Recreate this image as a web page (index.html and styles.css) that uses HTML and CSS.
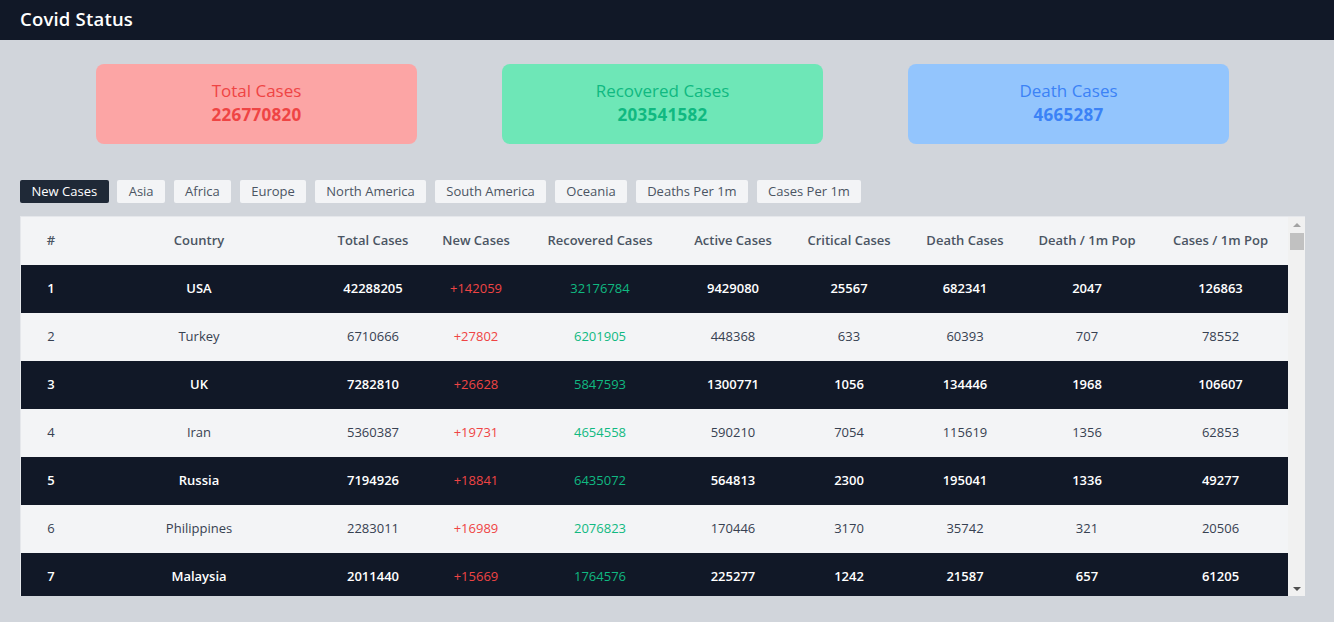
FILE: index.html
```html
<!DOCTYPE html>
<html>
<head>
<meta charset="utf-8">
<link rel="stylesheet" href="styles.css">
</head>
<body>
<header class="topbar"><h1 class="brand">Covid Status</h1></header>
<main class="content">
  <section class="cards">
    <div class="card card-red"><div class="card-title">Total Cases</div><div class="card-num">226770820</div></div>
    <div class="card card-green"><div class="card-title">Recovered Cases</div><div class="card-num">203541582</div></div>
    <div class="card card-blue"><div class="card-title">Death Cases</div><div class="card-num">4665287</div></div>
  </section>
  <nav class="tabs">
    <button class="tab active">New Cases</button>
    <button class="tab">Asia</button>
    <button class="tab">Africa</button>
    <button class="tab">Europe</button>
    <button class="tab">North America</button>
    <button class="tab">South America</button>
    <button class="tab">Oceania</button>
    <button class="tab">Deaths Per 1m</button>
    <button class="tab">Cases Per 1m</button>
  </nav>
  <div class="table-wrap">
    <div class="table-view">
      <table class="grid">
        <colgroup>
          <col class="c1"><col class="c2"><col class="c3"><col class="c4"><col class="c5"><col class="c6"><col class="c7"><col class="c8"><col class="c9"><col class="c10">
        </colgroup>
        <thead>
          <tr><th>#</th><th>Country</th><th>Total Cases</th><th>New Cases</th><th>Recovered Cases</th><th>Active Cases</th><th>Critical Cases</th><th>Death Cases</th><th>Death / 1m Pop</th><th>Cases / 1m Pop</th></tr>
        </thead>
        <tbody>
          <tr class="dark"><td>1</td><td>USA</td><td>42288205</td><td class="neg">+142059</td><td class="pos">32176784</td><td>9429080</td><td>25567</td><td>682341</td><td>2047</td><td>126863</td></tr>
          <tr class="light"><td>2</td><td>Turkey</td><td>6710666</td><td class="neg">+27802</td><td class="pos">6201905</td><td>448368</td><td>633</td><td>60393</td><td>707</td><td>78552</td></tr>
          <tr class="dark"><td>3</td><td>UK</td><td>7282810</td><td class="neg">+26628</td><td class="pos">5847593</td><td>1300771</td><td>1056</td><td>134446</td><td>1968</td><td>106607</td></tr>
          <tr class="light"><td>4</td><td>Iran</td><td>5360387</td><td class="neg">+19731</td><td class="pos">4654558</td><td>590210</td><td>7054</td><td>115619</td><td>1356</td><td>62853</td></tr>
          <tr class="dark"><td>5</td><td>Russia</td><td>7194926</td><td class="neg">+18841</td><td class="pos">6435072</td><td>564813</td><td>2300</td><td>195041</td><td>1336</td><td>49277</td></tr>
          <tr class="light"><td>6</td><td>Philippines</td><td>2283011</td><td class="neg">+16989</td><td class="pos">2076823</td><td>170446</td><td>3170</td><td>35742</td><td>321</td><td>20506</td></tr>
          <tr class="dark short"><td>7</td><td>Malaysia</td><td>2011440</td><td class="neg">+15669</td><td class="pos">1764576</td><td>225277</td><td>1242</td><td>21587</td><td>657</td><td>61205</td></tr>
        </tbody>
      </table>
    </div>
    <div class="scrollbar">
      <div class="sb-btn"><span class="arrow-up"></span></div>
      <div class="sb-thumb"></div>
      <div class="sb-track"></div>
      <div class="sb-btn"><span class="arrow-down"></span></div>
    </div>
  </div>
</main>
</body>
</html>
```
FILE: styles.css
```css
* { box-sizing: border-box; }
html, body { margin: 0; padding: 0; }
body {
  background: #d1d5db;
  font-family: "Open Sans", "DejaVu Sans", sans-serif;
  color: #374151;
  height: 622px;
  overflow: hidden;
}
.topbar {
  background: #111827;
  height: 40px;
  display: flex;
  align-items: center;
  padding: 0 20px 3px;
}
.brand {
  margin: 0;
  color: #fff;
  font-size: 18.5px;
  font-weight: 600;
  letter-spacing: 0.2px;
}
.content { padding: 24px 20px 0 20px; }
.cards {
  display: flex;
  gap: 85px;
  padding-left: 76px;
}
.card {
  width: 321px;
  height: 80px;
  border-radius: 8px;
  display: flex;
  flex-direction: column;
  align-items: center;
  justify-content: center;
  gap: 1px;
  font-size: 17px;
  padding-bottom: 4px;
}
.card-title { font-weight: 400; }
.card-num { font-weight: 700; letter-spacing: 0.3px; }
.card-red { background: #fca5a5; color: #ef4444; }
.card-green { background: #6ee7b7; color: #10b981; }
.card-blue { background: #93c5fd; color: #3b82f6; }

.tabs {
  display: flex;
  gap: 8.5px;
  margin-top: 36px;
}
.tab {
  font-family: inherit;
  font-size: 13px;
  border: none;
  background: #f3f4f6;
  color: #4b5563;
  height: 23px;
  padding: 0 11.5px 2px;
  border-radius: 2px;
}
.tab.active { background: #1f2937; color: #fff; }

.table-wrap {
  margin-top: 13px;
  width: 1285px;
  height: 380px;
  display: flex;
  background: #f3f4f6;
  border-top: 1px solid #e5e7eb;
  border-left: 1px solid #e5e7eb;
}
.table-view {
  flex: 1;
  overflow: hidden;
}
.scrollbar {
  width: 17px;
  background: #f1f1f1;
  display: flex;
  flex-direction: column;
}
.sb-btn {
  height: 15px;
  display: flex;
  align-items: center;
  justify-content: center;
}
.arrow-up {
  width: 0; height: 0;
  border-left: 4px solid transparent;
  border-right: 4px solid transparent;
  border-bottom: 4px solid #a3a3a3;
}
.arrow-down {
  width: 0; height: 0;
  border-left: 4px solid transparent;
  border-right: 4px solid transparent;
  border-top: 4px solid #505050;
}
.sb-thumb {
  margin: 1px 1px 0 2px;
  height: 17px;
  background: #c1c1c1;
}
.sb-track { flex: 1; }

.grid {
  width: 1267px;
  border-collapse: collapse;
  table-layout: fixed;
  font-size: 13px;
}
.c1 { width: 60px; } .c2 { width: 236px; } .c3 { width: 112px; } .c4 { width: 94px; }
.c5 { width: 154px; } .c6 { width: 112px; } .c7 { width: 120px; } .c8 { width: 112px; }
.c9 { width: 132px; } .c10 { width: 135px; }
.grid th, .grid td { height: 48px; text-align: center; padding: 0 0 2px; white-space: nowrap; }
.grid th { color: #4b5563; font-weight: 600; background: #f3f4f6; }
.grid .short td { height: 43px; padding: 2px 0 0; }
.dark { background: #111827; color: #fff; font-weight: 600; }
.light { background: #f3f4f6; color: #374151; font-weight: 400; }
.neg { color: #ef4444; font-weight: 400; }
.pos { color: #10b981; font-weight: 400; }
```
